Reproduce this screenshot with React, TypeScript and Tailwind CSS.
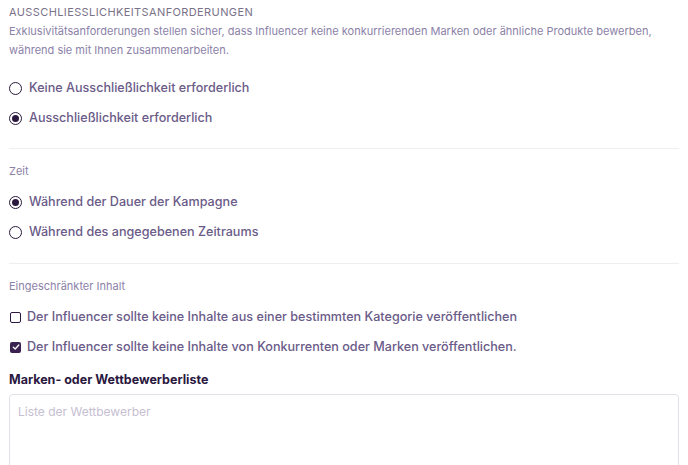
import React from "react";

function Radio({ checked, label }: { checked?: boolean; label: string }) {
  return (
    <label className="flex h-[30px] items-center gap-[7px]">
      <span className="flex h-[13px] w-[13px] items-center justify-center rounded-full border-[1.5px] border-[#2a1840]">
        {checked && <span className="h-[7px] w-[7px] rounded-full bg-[#2a1840]" />}
      </span>
      <span className="text-[12.6px] font-medium leading-[18px] text-[#6a5b88]">{label}</span>
    </label>
  );
}

function Check({ checked, label }: { checked?: boolean; label: string }) {
  return (
    <label className="flex h-[30px] items-center gap-[6px]">
      {checked ? (
        <span className="ml-[1px] flex h-[11px] w-[11px] items-center justify-center rounded-[2px] bg-[#3b2150]">
          <svg width="8" height="8" viewBox="0 0 8 8" fill="none">
            <path d="M1.3 4.2 3.2 6 6.8 2" stroke="white" strokeWidth="1.3" strokeLinecap="round" strokeLinejoin="round" />
          </svg>
        </span>
      ) : (
        <span className="ml-[1px] h-[11px] w-[11px] rounded-[2px] border-[1.5px] border-[#2a1840]" />
      )}
      <span className="text-[12.6px] font-medium leading-[18px] text-[#6a5b88]">{label}</span>
    </label>
  );
}

export default function App() {
  return (
    <main className="min-h-screen bg-white px-[9px] pt-[4px] font-['Inter',sans-serif]">
      {/* Exclusivity */}
      <h2 className="text-[11px] leading-[16px] tracking-[0.035em] uppercase text-[#7a7289]">
        Ausschliesslichkeitsanforderungen
      </h2>
      <p className="mt-[2px] w-[660px] text-[11px] leading-[19px] text-[#8c82a8]">
        Exklusivitätsanforderungen stellen sicher, dass Influencer keine konkurrierenden Marken oder ähnliche Produkte bewerben, während sie mit Ihnen zusammenarbeiten.
      </p>
      <div className="mt-[13px]">
        <Radio label="Keine Ausschließlichkeit erforderlich" />
        <Radio checked label="Ausschließlichkeit erforderlich" />
      </div>

      <div className="mt-[15px] border-t border-[#f0eef3]" />

      {/* Time */}
      <p className="mt-[14px] text-[11px] leading-[16px] text-[#8c82a8]">Zeit</p>
      <div className="mt-[8px]">
        <Radio checked label="Während der Dauer der Kampagne" />
        <Radio label="Während des angegebenen Zeitraums" />
      </div>

      <div className="mt-[16px] border-t border-[#f0eef3]" />

      {/* Restricted content */}
      <p className="mt-[14px] text-[11px] leading-[16px] text-[#8c82a8]">Eingeschränkter Inhalt</p>
      <div className="mt-[8px]">
        <Check label="Der Influencer sollte keine Inhalte aus einer bestimmten Kategorie veröffentlichen" />
        <Check checked label="Der Influencer sollte keine Inhalte von Konkurrenten oder Marken veröffentlichen." />
      </div>

      <p className="mt-[9px] text-[12.5px] font-bold leading-[18px] text-[#2a1840]">
        Marken- oder Wettbewerberliste
      </p>
      <textarea
        placeholder="Liste der Wettbewerber"
        className="mt-[5px] block h-[100px] w-full resize-none rounded-[4px] border border-[#e2dfe8] px-[8px] pt-[8px] text-[12px] leading-[18px] text-[#6a5b88] outline-none placeholder:text-[#c6c0d2]"
      />
    </main>
  );
}
